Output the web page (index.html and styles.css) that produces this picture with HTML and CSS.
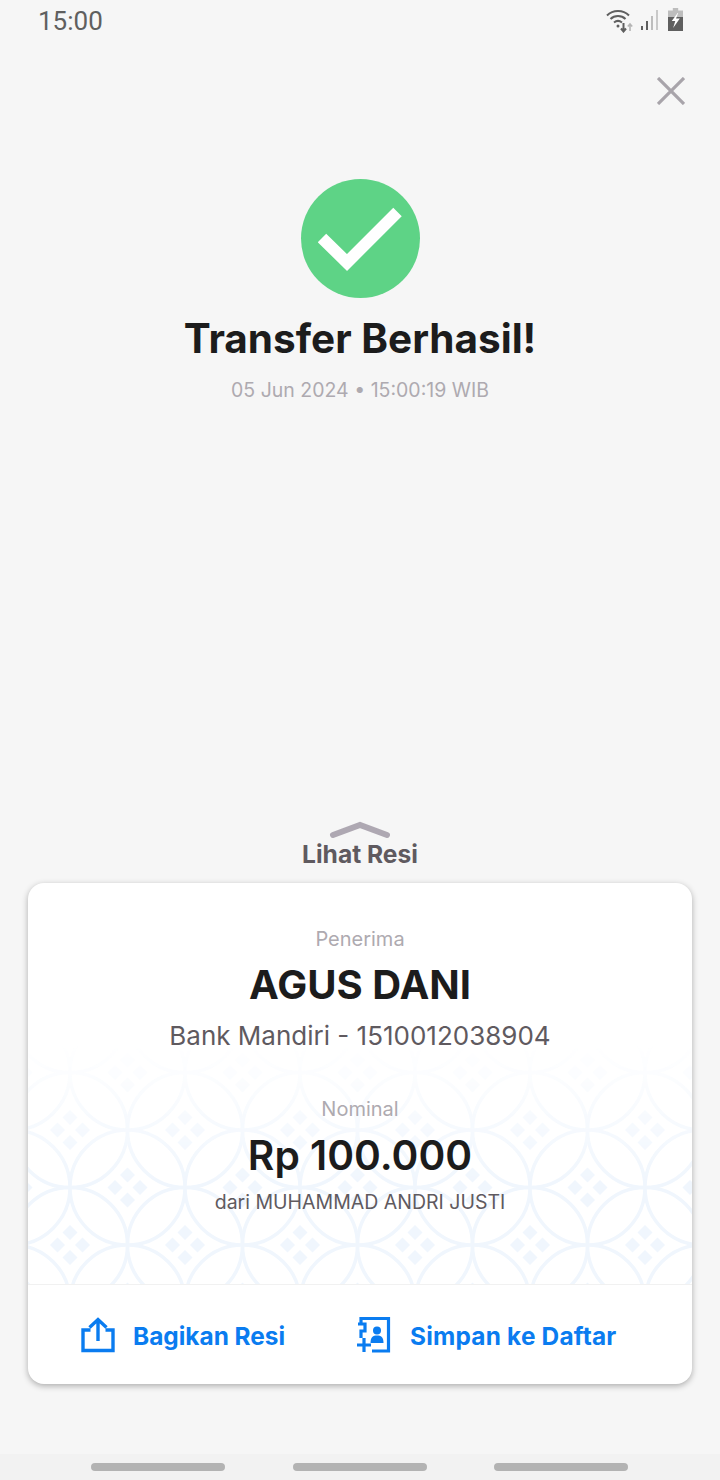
FILE: index.html
```html
<!DOCTYPE html>
<html lang="en">
<head>
    <meta charset="UTF-8">
    <meta name="viewport" content="width=device-width, initial-scale=1.0">
    <title>Transfer Berhasil</title>
    <link rel="stylesheet" href="styles.css">
</head>
<body>
    <div class="screen">
        <div class="status-bar">
            <span class="status-time">15:00</span>
            <div class="status-icons">
                <svg width="30" height="26" viewBox="0 0 30 26" fill="none" stroke="#5f5f5f">
                    <path d="M1 8.500C7 2.500 17 2.500 23 8.500" stroke-width="2"/>
                    <path d="M4.500 12C8.500 8 15.500 8 19.500 12" stroke-width="2"/>
                    <path d="M8 15.500C10.500 13.500 13.500 13.500 16 15.500" stroke-width="2"/>
                    <circle cx="12" cy="19" r="1.500" fill="#5f5f5f" stroke="none"/>
                    <path d="M17.500 16V24M15 21.500L17.500 24.500L20 21.500" stroke-width="2"/>
                    <path d="M24 24V17M21.800 19.500L24 17L26.200 19.500" stroke="#b5b5b5" stroke-width="1.600"/>
                </svg>
                <svg width="20" height="22" viewBox="0 0 20 22">
                    <rect x="1" y="17" width="2" height="4" fill="#5f5f5f"/>
                    <rect x="6" y="12" width="2" height="9" fill="#5f5f5f"/>
                    <rect x="11" y="7" width="2" height="14" fill="#bdbdbd"/>
                    <rect x="16" y="1" width="2" height="20" fill="#c9c9c9"/>
                </svg>
                <svg width="15" height="23" viewBox="0 0 14 23" preserveAspectRatio="none">
                    <path d="M4.500 0H9.500V2.500H14V23H0V2.500H4.500Z" fill="#bdbdbd"/>
                    <rect y="9" width="14" height="14" fill="#5f5f5f"/>
                    <path d="M9 5L3.500 13H6.800L4.800 20L11 10.500H7.500L9.500 5Z" fill="#fff"/>
                </svg>
            </div>
        </div>

        <div class="close-row">
            <svg class="close-icon" width="28" height="28" viewBox="0 0 28 28" fill="none" stroke="#a8a4aa" stroke-width="3.200">
                <path d="M1 1L27 27M27 1L1 27"/>
            </svg>
        </div>

        <div class="result">
            <div class="check-badge">
                <svg width="84" height="64" viewBox="0 0 84 64" fill="none" stroke="#fff" stroke-width="12">
                    <path d="M4 31L29 55.500L79.500 5"/>
                </svg>
            </div>
            <h1 class="result-title">Transfer Berhasil!</h1>
            <p class="result-date">05 Jun 2024 • 15:00:19 WIB</p>
        </div>

        <div class="receipt-toggle">
            <svg width="62" height="18" viewBox="0 0 62 18" fill="none" stroke="#aea8b2" stroke-width="6" stroke-linecap="round">
                <path d="M4 14L31 4L58 14"/>
            </svg>
            <span class="receipt-label">Lihat Resi</span>
        </div>

        <div class="card">
            <div class="card-body">
                <svg class="batik" width="664" height="401">
                    <defs>
                        <g id="motif" fill="#f0f6fd">
                            <path d="M0 -20L7.500 -12.500L0 -5L-7.500 -12.500Z"/>
                            <path d="M0 20L7.500 12.500L0 5L-7.500 12.500Z"/>
                            <path d="M-20 0L-12.500 -7.500L-5 0L-12.500 7.500Z"/>
                            <path d="M20 0L12.500 -7.500L5 0L12.500 7.500Z"/>
                        </g>
                        <pattern id="batikTile" x="42" y="247" width="115" height="115" patternUnits="userSpaceOnUse">
                            <g fill="none" stroke="#f0f6fd" stroke-width="3.500">
                                <circle cx="0" cy="0" r="57.500"/>
                                <circle cx="115" cy="0" r="57.500"/>
                                <circle cx="0" cy="115" r="57.500"/>
                                <circle cx="115" cy="115" r="57.500"/>
                                <circle cx="57.500" cy="57.500" r="57.500"/>
                            </g>
                            <use href="#motif" x="0" y="0"/>
                            <use href="#motif" x="115" y="0"/>
                            <use href="#motif" x="0" y="115"/>
                            <use href="#motif" x="115" y="115"/>
                            <use href="#motif" x="57.500" y="57.500"/>
                        </pattern>
                        <linearGradient id="batikFade" x1="0" y1="0" x2="0" y2="1">
                            <stop offset="0.40" stop-color="#fff" stop-opacity="0"/>
                            <stop offset="0.75" stop-color="#fff"/>
                        </linearGradient>
                        <mask id="batikMask">
                            <rect width="664" height="401" fill="url(#batikFade)"/>
                        </mask>
                    </defs>
                    <rect width="664" height="401" fill="url(#batikTile)" mask="url(#batikMask)"/>
                </svg>

                <div class="detail">
                    <span class="detail-label">Penerima</span>
                    <span class="detail-name">AGUS DANI</span>
                    <span class="detail-sub detail-bank">Bank Mandiri - 1510012038904</span>
                </div>
                <div class="detail detail-amount">
                    <span class="detail-label">Nominal</span>
                    <span class="detail-value">Rp 100.000</span>
                    <span class="detail-sub detail-from">dari MUHAMMAD ANDRI JUSTI</span>
                </div>
            </div>

            <div class="card-actions">
                <div class="action action-share">
                    <svg width="34" height="36" viewBox="0 0 34 36" fill="none" stroke="#0a7cf0" stroke-width="3.400">
                        <path d="M9.500 13H2V33.500H32V13H24.500"/>
                        <path d="M17 24V3M8.500 10.500L17 2.500L25.500 10.500"/>
                    </svg>
                    <span>Bagikan Resi</span>
                </div>
                <div class="action action-save">
                    <svg width="34" height="36" viewBox="0 0 34 36" fill="none" stroke="#0a7cf0" stroke-width="3.200">
                        <path d="M4 7V1.500H31.500V34H15"/>
                        <path d="M1 7H8V14H4V21"/>
                        <path d="M0 28H14M7 21V35"/>
                        <circle cx="20" cy="13.500" r="4" fill="#0a7cf0" stroke="none"/>
                        <path d="M13.500 26C13.500 20 16 18.500 20 18.500C24 18.500 26.500 20 26.500 26Z" fill="#0a7cf0" stroke="none"/>
                    </svg>
                    <span>Simpan ke Daftar</span>
                </div>
            </div>
        </div>

        <div class="nav-bar">
            <span class="nav-pill"></span>
            <span class="nav-pill"></span>
            <span class="nav-pill"></span>
        </div>
    </div>
</body>
</html>
```

FILE: styles.css
```css
* {
    margin: 0;
    padding: 0;
    box-sizing: border-box;
}

body {
    font-family: Inter, 'Liberation Sans', sans-serif;
    background: #f6f6f6;
    color: #1c1c1c;
}

.screen {
    height: 1480px;
    display: flex;
    flex-direction: column;
}

.status-bar {
    height: 42px;
    display: flex;
    justify-content: space-between;
    align-items: center;
    padding: 0 37px 0 38px;
}

.status-time {
    font-family: Roboto, sans-serif;
    font-size: 26px;
    color: #5f5f5f;
}

.status-icons {
    display: flex;
    align-items: center;
    gap: 4px;
    margin-bottom: 3px;
}

.status-icons svg:last-child {
    margin-left: 4px;
}

.close-row {
    display: flex;
    justify-content: flex-end;
    padding: 35px 35px 0 0;
}

.result {
    display: flex;
    flex-direction: column;
    align-items: center;
    margin-top: 74px;
}

.check-badge {
    width: 119px;
    height: 119px;
    border-radius: 50%;
    background: #5ed386;
    display: flex;
    align-items: center;
    justify-content: center;
}

.result-title {
    margin-top: 18px;
    font-size: 40.5px;
    line-height: 46px;
    font-weight: 700;
}

.result-date {
    margin-top: 16px;
    font-size: 19.5px;
    line-height: 24px;
    color: #aeaab0;
}

.receipt-toggle {
    margin-top: auto;
    display: flex;
    flex-direction: column;
    align-items: center;
}

.receipt-label {
    font-size: 24.6px;
    line-height: 30px;
    font-weight: 700;
    color: #5f5a5f;
}

.card {
    margin: 14px 28px 0;
    height: 501px;
    background: #fff;
    border-radius: 16px;
    box-shadow: 0 2px 6px rgba(0, 0, 0, 0.3);
    overflow: hidden;
    display: flex;
    flex-direction: column;
}

.card-body {
    position: relative;
    height: 402px;
    padding-top: 43px;
    border-bottom: 1px solid #f1f1f1;
}

.batik {
    position: absolute;
    top: 0;
    left: 0;
}

.detail {
    position: relative;
    display: flex;
    flex-direction: column;
    align-items: center;
}

.detail-amount {
    margin-top: 44px;
}

.detail-label {
    font-size: 20px;
    line-height: 26px;
    color: #aeaab0;
}

.detail-name {
    margin-top: 10px;
    font-size: 40px;
    line-height: 46px;
    font-weight: 700;
}

.detail-value {
    margin-top: 11px;
    font-size: 40.7px;
    line-height: 46px;
    font-weight: 600;
}

.detail-sub {
    color: #5f5a5f;
}

.detail-bank {
    margin-top: 12px;
    font-size: 26px;
    line-height: 32px;
}

.detail-from {
    margin-top: 10px;
    font-size: 19.5px;
    line-height: 26px;
}

.card-actions {
    flex: 1;
    display: flex;
    align-items: center;
    padding-left: 53px;
    gap: 72px;
}

.action {
    display: flex;
    align-items: center;
    gap: 18px;
    font-size: 24.4px;
    font-weight: 700;
    color: #0a7cf0;
}

.action-save {
    gap: 19px;
    letter-spacing: 0.2px;
}

.action span {
    padding-top: 2px;
}

.nav-bar {
    margin-top: 70px;
    height: 26px;
    background: #f2f2f2;
    display: flex;
    justify-content: center;
    align-items: center;
    gap: 67.5px;
    padding: 0 1px 1px 0;
}

.nav-pill {
    width: 134px;
    height: 8px;
    border-radius: 4px;
    background: #b3b3b3;
}
```
